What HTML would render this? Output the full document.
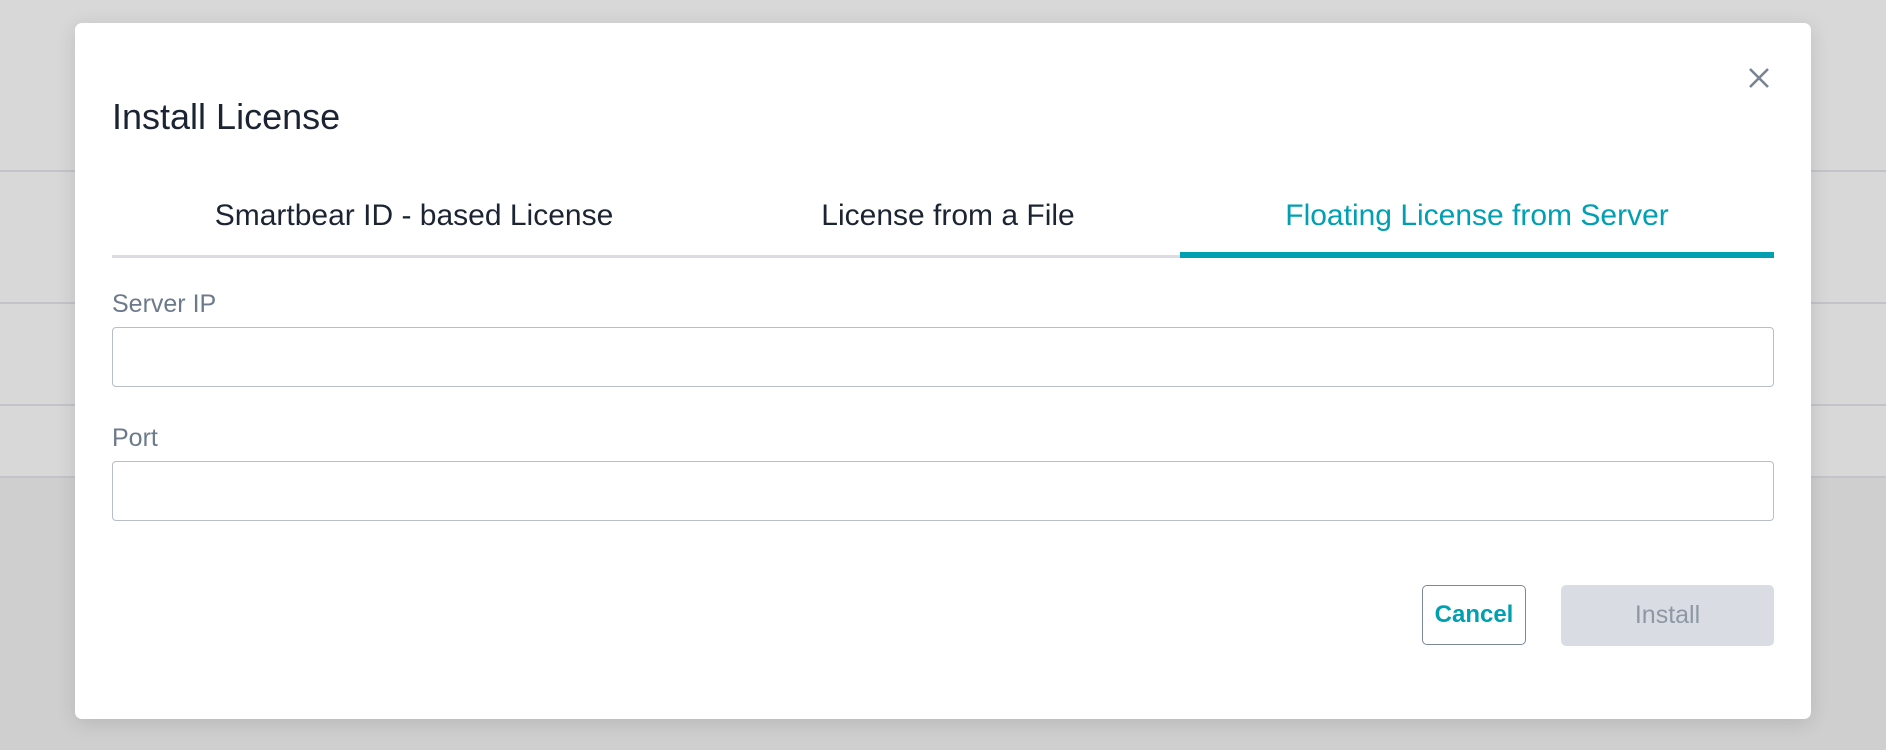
<!DOCTYPE html>
<html><head><style>
body{margin:0;width:1886px;height:750px;background:#d8d8d8;position:relative;overflow:hidden;font-family:"Liberation Sans",sans-serif}
.hl{position:absolute;left:0;right:0;height:2px;background:#c2c4c8}
.m{position:absolute;left:75px;top:23px;width:1736px;height:696px;background:#fff;border-radius:7px;box-shadow:0 4px 20px rgba(0,0,0,.12)}
.a{position:absolute}
.t{color:#1c2433;font-size:30px;text-align:center;top:176px}
.lbl{color:#6c7a8c;font-size:25px;left:37px}
.in{left:37px;width:1660px;height:58px;border:1.5px solid #b7bdc9;border-radius:4px}
</style></head><body>
<div class="hl" style="top:170px"></div>
<div class="hl" style="top:302px"></div>
<div class="hl" style="top:404px"></div>
<div class="a" style="left:0;right:0;top:476px;bottom:0;background:#cfcfcf;border-top:2px solid #c2c4c8"></div>
<div class="m">
<div class="a" style="left:37px;top:73px;font-size:36px;color:#1c2433">Install License</div>
<svg class="a" style="left:1672px;top:43px" width="24" height="24" viewBox="0 0 24 24"><path d="M3 3L21 21M21 3L3 21" stroke="#7a8394" stroke-width="2.6"/></svg>
<div class="a t" style="left:37px;width:604px">Smartbear ID - based License</div>
<div class="a t" style="left:641px;width:464px">License from a File</div>
<div class="a t" style="left:1105px;width:594px;color:#00a0b2">Floating License from Server</div>
<div class="a" style="left:37px;top:232px;width:1662px;height:3px;background:#d9dde3"></div>
<div class="a" style="left:1105px;top:229px;width:594px;height:6px;background:#00a0b2"></div>
<div class="a lbl" style="top:267px">Server IP</div>
<div class="a in" style="top:304px"></div>
<div class="a lbl" style="top:401px">Port</div>
<div class="a in" style="top:438px"></div>
<div class="a" style="left:1347px;top:562px;width:104px;height:60px;border:1.5px solid #7d879a;border-radius:5px;box-sizing:border-box;color:#00a0b2;font-weight:bold;font-size:24px;text-align:center;line-height:57px">Cancel</div>
<div class="a" style="left:1486px;top:562px;width:213px;height:61px;background:#d9dde3;border-radius:5px;color:#8e97a5;font-size:25px;text-align:center;line-height:61px">Install</div>
</div>
</body></html>
